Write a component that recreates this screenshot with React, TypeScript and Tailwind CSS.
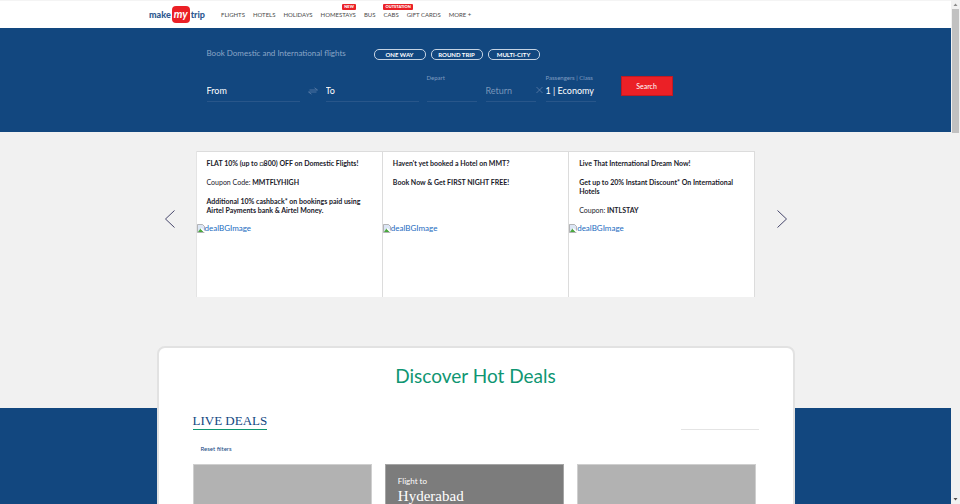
import type { ReactNode } from 'react';

const navLinks = [
  { label: 'FLIGHTS' },
  { label: 'HOTELS' },
  { label: 'HOLIDAYS' },
  { label: 'HOMESTAYS', badge: 'NEW', side: 'right-0' },
  { label: 'BUS' },
  { label: 'CABS', badge: 'OUTSTATION', side: 'left-0' },
  { label: 'GIFT CARDS' },
  { label: 'MORE +' },
];

function Logo() {
  return (
    <a href="#" aria-label="makemytrip" className="flex w-[57px] items-center text-[9px] leading-3 font-black text-[#2f5a91]">
      <span>make</span>
      <span className="mx-px flex h-[17px] w-[18px] shrink-0 items-center justify-center rounded-[4px] bg-[#eb2026] pb-px text-[11px] font-bold italic text-white">
        my
      </span>
      <span>trip</span>
    </a>
  );
}

function Header() {
  return (
    <header className="h-7 border-t border-[#f4f4f4] bg-white">
      <div className="mx-auto flex h-full max-w-[653px] items-center">
        <Logo />
        <nav className="ml-[15px] flex gap-2 text-[6px] leading-3 text-[#4a4a4a]">
          {navLinks.map((link) => (
            <a key={link.label} href="#" className="relative whitespace-nowrap">
              {link.label}
              {link.badge && (
                <span className={`absolute -top-[5px] ${link.side} rounded-[1px] bg-[#eb2026] px-[2px] text-[4px] leading-[6px] font-black text-white`}>
                  {link.badge}
                </span>
              )}
            </a>
          ))}
        </nav>
      </div>
    </header>
  );
}

const fieldBox = 'h-7 border-b border-[#28568a] flex flex-col justify-between';
const fieldLabel = 'block h-2 text-[6px] leading-2 text-[#7f9cc0] whitespace-nowrap';
const fieldInput = 'block w-full bg-transparent text-[9px] leading-3 h-[18px] pb-[3px] outline-none';

function SearchPanel() {
  return (
    <section className="h-[104px] bg-[#12477f]">
      <form className="mx-auto max-w-[538px] pt-5" onSubmit={(e) => e.preventDefault()}>
        <div className="flex h-3 items-end">
          <h1 className="w-[167px] pb-[2px] text-[8px] leading-[10px] text-[#8ba6c7]">Book Domestic and International flights</h1>
          <div className="flex gap-[5px]">
            {['ONE WAY', 'ROUND TRIP', 'MULTI-CITY'].map((t) => (
              <button
                key={t}
                type="button"
                className="h-[11px] w-[52px] rounded-[5px] border border-[#c5d3e3] text-[6px] leading-[9px] font-bold text-white"
              >
                {t}
              </button>
            ))}
          </div>
        </div>
        <div className="mt-[14px] flex">
          <div className={`${fieldBox} w-[93px]`}>
            <span className="h-2" />
            <input aria-label="From" placeholder="From" className={`${fieldInput} text-white placeholder:text-white`} />
          </div>
          <button type="button" aria-label="Swap cities" className="mt-[9px] flex h-4 w-[26px] items-center justify-center">
            <svg width="10" height="8" viewBox="0 0 10 8" fill="none" stroke="#5d7fa8" strokeWidth="0.8">
              <path d="M1.500 3H9.500L6.500 0.800M8.500 5H0.500L3.500 7.200" />
            </svg>
          </button>
          <div className={`${fieldBox} w-[93px]`}>
            <span className="h-2" />
            <input aria-label="To" placeholder="To" className={`${fieldInput} text-white placeholder:text-white`} />
          </div>
          <div className={`${fieldBox} ml-2 w-[50px]`}>
            <label htmlFor="depart" className={fieldLabel}>Depart</label>
            <input id="depart" className={`${fieldInput} text-white`} />
          </div>
          <div className={`${fieldBox} ml-[9px] w-[50px]`}>
            <span className="h-2" />
            <input aria-label="Return" placeholder="Return" className={`${fieldInput} text-white placeholder:text-[#7896ba]`} />
          </div>
          <button type="button" aria-label="Clear return date" className="mt-2 flex h-4 w-[10px] items-center justify-start">
            <svg width="7" height="8" viewBox="0 0 7 8" stroke="#5d7fa8" strokeWidth="0.8">
              <path d="M0.500 1L6.500 7M6.500 1L0.500 7" />
            </svg>
          </button>
          <div className={`${fieldBox} w-[50px]`}>
            <span className={fieldLabel}>Passengers | Class</span>
            <button type="button" className="h-[18px] pb-[3px] text-left text-[9px] leading-3 whitespace-nowrap text-white">
              1 | Economy
            </button>
          </div>
          <button
            type="submit"
            className="mt-[2px] ml-[25px] h-5 w-[52px] border border-[#c01a22] bg-[#eb2026] text-[7px] leading-3 text-white"
          >
            Search
          </button>
        </div>
      </form>
    </section>
  );
}

function BrokenImage() {
  return (
    <a href="#" className="flex h-[9px] items-center text-[8px] leading-[9px] text-[#1b6bc0]">
      <svg width="8" height="9" viewBox="0 0 8 9" className="shrink-0">
        <path d="M0.500 0.500H5.500L7.500 2.500V8.500H0.500Z" fill="#dce6f5" stroke="#9a9a9a" strokeWidth="0.7" />
        <path d="M1 8L3.500 4.500L6.500 8Z" fill="#4ba83d" />
        <path d="M4.500 4L8 7V9L3.500 5Z" fill="#fff" />
      </svg>
      dealBGImage
    </a>
  );
}

function OfferCard({ children }: { children: ReactNode }) {
  return (
    <article className="h-[146px] flex-1 border-t border-r border-[#dcdcdc] bg-white">
      <div className="flex h-[72px] flex-col gap-[10px] px-[10px] pt-[7px] text-[7px] leading-[9px] font-bold text-[#1a1a2a]">
        {children}
      </div>
      <BrokenImage />
    </article>
  );
}

function Arrow({ label, d }: { label: string; d: string }) {
  return (
    <button type="button" aria-label={label} className="mt-[11px] flex w-[10px] justify-center">
      <svg width="10" height="18" viewBox="0 0 10 18" fill="none" stroke="#33335c" strokeWidth="0.9">
        <path d={d} />
      </svg>
    </button>
  );
}

function Offers() {
  return (
    <section className="mx-auto flex h-[276px] max-w-[622px] items-start justify-between pt-[19px]">
      <div className="flex h-[125px] items-center">
        <Arrow label="Previous offers" d="M9.500 0.500L0.500 9L9.500 17.500" />
      </div>
      <div className="flex w-[560px] border-l border-[#e4e4e4]">
        <OfferCard>
          <p>FLAT 10% (up to □800) OFF on Domestic Flights!</p>
          <p><span className="font-normal">Coupon Code:</span> MMTFLYHIGH</p>
          <p>Additional 10% cashback* on bookings paid using Airtel Payments bank &amp; Airtel Money.</p>
        </OfferCard>
        <OfferCard>
          <p>Haven't yet booked a Hotel on MMT?</p>
          <p>Book Now &amp; Get FIRST NIGHT FREE!</p>
        </OfferCard>
        <OfferCard>
          <p>Live That International Dream Now!</p>
          <p>Get up to 20% Instant Discount* On International Hotels</p>
          <p><span className="font-normal">Coupon:</span> INTLSTAY</p>
        </OfferCard>
      </div>
      <div className="flex h-[125px] items-center">
        <Arrow label="Next offers" d="M0.500 0.500L9.500 9L0.500 17.500" />
      </div>
    </section>
  );
}

function HotDeals() {
  return (
    <section className="flow-root bg-[#12477f] pb-10">
      <div className="relative mx-auto -mt-[62px] max-w-[638px] rounded-lg border-2 border-[#e2e2e2] bg-white px-[34px] pt-[14px]">
        <h2 className="text-center text-[19px] leading-7 text-[#0f9672]">Discover Hot Deals</h2>
        <div className="mt-[23px] flex items-end justify-between">
          <h3 className="border-b border-[#0f9672] font-['Liberation_Serif',serif] text-[13px] leading-4 text-[#12477f]">
            LIVE DEALS
          </h3>
          <input aria-label="Filter deals" className="block h-4 w-[78px] border-b border-[#e4e4e4] outline-none" />
        </div>
        <button type="button" className="mt-[15px] ml-2 block text-[6px] leading-2 text-[#12477f]">Reset filters</button>
        <div className="mt-[11px] mr-[2px] grid grid-cols-3 gap-[13px]">
          <article className="h-[120px] border border-[#cfcfcf] bg-[#b2b2b2]" />
          <article className="h-[120px] border border-[#a5a5a5] bg-[#7c7c7c] px-3 pt-[10px] text-white">
            <p className="text-[8px] leading-3">Flight to</p>
            <h4 className="font-['Liberation_Serif',serif] text-[15px] leading-[18px]">Hyderabad</h4>
          </article>
          <article className="h-[120px] border border-[#cfcfcf] bg-[#b2b2b2]" />
        </div>
      </div>
    </section>
  );
}

function Scrollbar() {
  return (
    <div aria-hidden="true" className="flex w-[9px] shrink-0 flex-col items-center bg-[#f1f1f1]">
      <svg width="9" height="9" viewBox="0 0 9 9"><path d="M2.500 6L4.500 3.500L6.500 6Z" fill="#8a8a8a" /></svg>
      <div className="h-[124px] w-[7px] bg-[#c1c1c1]" />
      <svg width="9" height="9" viewBox="0 0 9 9" className="mt-auto"><path d="M2.500 3L4.500 5.500L6.500 3Z" fill="#505050" /></svg>
    </div>
  );
}

export default function App() {
  return (
    <div className="flex h-screen overflow-hidden bg-[#f1f1f1] font-['Lato',sans-serif]">
      <main className="min-w-0 flex-1 overflow-hidden">
        <Header />
        <SearchPanel />
        <Offers />
        <HotDeals />
      </main>
      <Scrollbar />
    </div>
  );
}
